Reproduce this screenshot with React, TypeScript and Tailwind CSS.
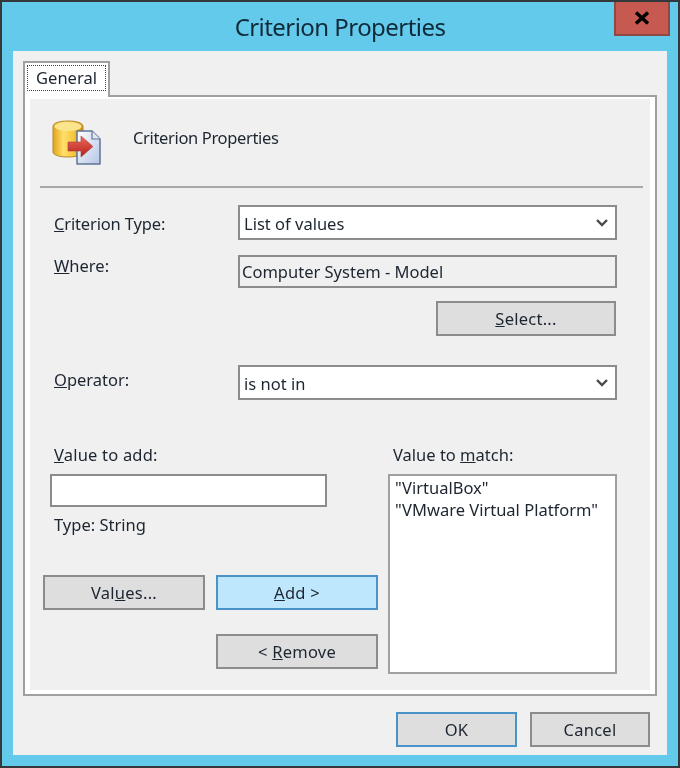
const textFont = "font-['Noto_Sans',sans-serif]";

function DbIcon() {
  return (
    <svg width="50" height="47" viewBox="0 0 50 47" className="shrink-0">
      <defs>
        <linearGradient id="gold" x1="0" x2="1" y1="0" y2="0">
          <stop offset="0" stopColor="#e0a31c" />
          <stop offset="0.35" stopColor="#ffe06a" />
          <stop offset="0.7" stopColor="#f7c53a" />
          <stop offset="1" stopColor="#c98a12" />
        </linearGradient>
        <linearGradient id="page" x1="0" x2="1" y1="0" y2="1">
          <stop offset="0" stopColor="#ffffff" />
          <stop offset="1" stopColor="#b4c6e6" />
        </linearGradient>
        <linearGradient id="arrow" x1="0" x2="0" y1="0" y2="1">
          <stop offset="0" stopColor="#ef6a5c" />
          <stop offset="1" stopColor="#b3201c" />
        </linearGradient>
      </defs>
      <path d="M1 7.500C1 4 7 2 16 2s15 2 15 5.500V33c0 3-6.500 5-15 5S1 36 1 33Z" fill="url(#gold)" stroke="#b98a2a" strokeWidth="1" />
      <ellipse cx="16" cy="7.500" rx="13.500" ry="4.500" fill="#fbe58c" />
      <path d="M25 12h15l8 8v25H25Z" fill="url(#page)" stroke="#5f7396" strokeWidth="1.500" strokeLinejoin="round" />
      <path d="M40 12v8h8" fill="#dfe7f5" stroke="#5f7396" strokeWidth="1.200" strokeLinejoin="round" />
      <path d="M16 23h13v-6l12 10.500L29 38v-6H16Z" fill="url(#arrow)" stroke="#a8413a" strokeWidth="0.600" />
    </svg>
  );
}

function Chevron() {
  return (
    <svg width="14" height="10" viewBox="0 0 14 10" className="shrink-0">
      <path d="M2 2l5 5 5-5" fill="none" stroke="#4a4a4a" strokeWidth="2.400" />
    </svg>
  );
}

function Dropdown({ value }: { value: string }) {
  return (
    <div className="flex h-[35px] w-[379px] items-center justify-between border-2 border-[#8c8c8c] bg-white pl-[4px] pr-[6px]">
      <span className="pt-[2px]">{value}</span>
      <Chevron />
    </div>
  );
}

function Btn({ children, blue, width }: { children: React.ReactNode; blue?: "edge" | "fill"; width: string }) {
  const skin =
    blue === "fill"
      ? "border-[#4a93c8] bg-[#bee6fd]"
      : blue === "edge"
        ? "border-[#4a93c8] bg-[#dedede]"
        : "border-[#8c8c8c] bg-[#dedede]";
  return (
    <div className={`flex h-[35px] items-center justify-center border-2 tracking-[0.25px] ${skin} ${width}`}>
      {children}
    </div>
  );
}

export default function App() {
  return (
    <div className={`relative flex h-[768px] w-[680px] flex-col overflow-hidden border-2 border-[#33383b] bg-[#63caeb] text-[16.500px] leading-[22px] text-[#1c2530] blur-[0.35px] ${textFont}`}>
      <div className="flex h-[49px] shrink-0 items-center justify-center text-[24px] tracking-[-0.55px] text-[#102a3a]">
        Criterion Properties
      </div>
      <div className="absolute right-[8px] top-0 flex h-[34px] w-[56px] items-center justify-center border-2 border-t-0 border-[#8e4a42] bg-[#c75a50]">
        <svg width="16" height="14" viewBox="0 0 16 14">
          <path d="M2 1.500l12 11M14 1.500l-12 11" stroke="#000" strokeWidth="3.500" />
        </svg>
      </div>

      <div className="mx-[11px] flex h-[704px] flex-col bg-[#f0f0f0] px-[10px] pt-[10px]">
        <div className="flex">
          <div className="z-10 -mb-[2px] h-[36px] w-[87px] border-2 border-b-0 border-[#a0a0a0] bg-white p-[2px]">
            <div className="flex h-[26px] w-full items-center justify-center border-[1.500px] border-dotted border-[#444]">
              General
            </div>
          </div>
        </div>
        <div className="h-[601px] w-[634px] border-2 border-[#a0a0a0] bg-[#f0f0f0]">
          <div className="flex h-full flex-col border-x-[5px] border-t-[2px] border-b-[4px] border-white">
            <div className="flex items-center pl-[22px] pt-[20px]">
              <DbIcon />
              <span className="-mt-[10px] ml-[31px] tracking-[-0.35px]">Criterion Properties</span>
            </div>
            <div className="ml-[10px] mt-[20px] h-[2px] w-[603px] bg-[#a8a8a8]" />
            <div className="flex pt-[17px]">
              <div className="w-[208px] pl-[24px] pt-[8px] tracking-[-0.15px]"><u>C</u>riterion Type:</div>
              <Dropdown value="List of values" />
            </div>
            <div className="flex pt-[15px]">
              <div className="w-[208px] pl-[24px]"><u>W</u>here:</div>
              <div className="flex h-[33px] w-[379px] items-center border-2 border-[#8c8c8c] pl-[2px] pt-[1px]">Computer System - Model</div>
            </div>
            <div className="flex justify-end pr-[34px] pt-[13px]">
              <Btn width="w-[180px]"><span><u>S</u>elect...</span></Btn>
            </div>
            <div className="flex pt-[29px]">
              <div className="w-[208px] pl-[24px] pt-[4px]"><u>O</u>perator:</div>
              <Dropdown value="is not in" />
            </div>
            <div className="flex pt-[44px]">
              <div className="flex w-[358px] flex-col">
                <div className="pl-[24px] tracking-[0.2px]"><u>V</u>alue to add:</div>
                <div className="ml-[20px] mt-[8px] h-[33px] w-[277px] border-2 border-[#8c8c8c] bg-white" />
                <div className="pl-[24px] pt-[7px]">Type: String</div>
                <div className="flex pl-[13px] pt-[39px]">
                  <Btn width="w-[162px]"><span>Val<u>u</u>es...</span></Btn>
                  <div className="w-[11px]" />
                  <Btn blue="fill" width="w-[162px]"><span><u>A</u>dd &gt;</span></Btn>
                </div>
                <div className="flex justify-end pr-[10px] pt-[24px]">
                  <Btn width="w-[162px]"><span>&lt; <u>R</u>emove</span></Btn>
                </div>
              </div>
              <div className="flex flex-col">
                <div className="pl-[5px]">Value to <u>m</u>atch:</div>
                <div className="mt-[8px] h-[200px] w-[229px] border-2 border-[#a0a0a0] bg-white pl-[5px] pt-[1px]">
                  <div>"VirtualBox"</div>
                  <div>"VMware Virtual Platform"</div>
                </div>
              </div>
            </div>
          </div>
        </div>
        <div className="flex justify-end gap-[13px] pr-[7px] pt-[16px]">
          <Btn blue="edge" width="w-[121px]">OK</Btn>
          <Btn width="w-[120px]">Cancel</Btn>
        </div>
      </div>
    </div>
  );
}
